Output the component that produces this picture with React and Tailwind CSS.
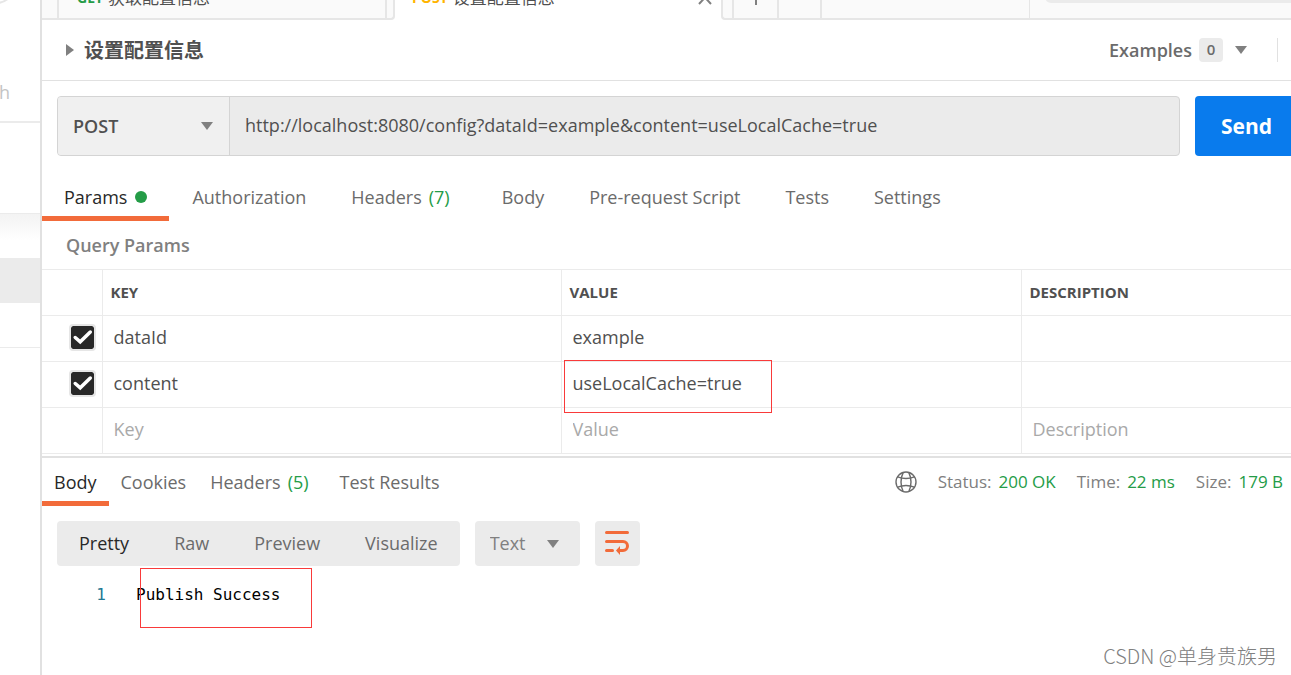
import { useState } from 'react';

const requestTabs = [
  { label: 'Params', dot: true },
  { label: 'Authorization' },
  { label: 'Headers', count: 7 },
  { label: 'Body' },
  { label: 'Pre-request Script' },
  { label: 'Tests' },
  { label: 'Settings' }
];

const responseTabs = [
  { label: 'Body' },
  { label: 'Cookies' },
  { label: 'Headers', count: 5 },
  { label: 'Test Results' }
];

const viewModes = ['Pretty', 'Raw', 'Preview', 'Visualize'];

const responseMeta = [
  { label: 'Status:', value: '200 OK' },
  { label: 'Time:', value: '22 ms' },
  { label: 'Size:', value: '179 B' }
];

const initialParams = [
  { key: 'dataId', value: 'example' },
  { key: 'content', value: 'useLocalCache=true', marked: true }
];

const Caret = ({ className = '' }) => (
  <svg viewBox="0 0 12 8" aria-hidden="true" className={`w-3 h-2 shrink-0 fill-[#808080] ${className}`}>
    <path d="M0 0h12L6 8z" />
  </svg>
);

const GlobeIcon = () => (
  <svg viewBox="0 0 22 22" fill="none" stroke="#6b6b6b" strokeWidth="1.4" className="w-[22px] h-[22px]">
    <circle cx="11" cy="11" r="10" />
    <path d="M8.2 1.4C5.4 7.5 5.4 14.5 8.2 20.6M13.8 1.4c2.8 6.1 2.8 13.1 0 19.2" />
    <path d="M2.6 5.8c5.5 2.2 11.3 2.2 16.8 0M2.6 16.2c5.500-2.200 11.300-2.200 16.800 0" />
  </svg>
);

const WrapIcon = () => (
  <svg viewBox="0 0 24 24" fill="none" stroke="#f26b3a" strokeWidth="3" strokeLinecap="round" className="w-6 h-6">
    <path d="M1.5 1.5h21M1.5 10.5h16.5a4.5 4.5 0 0 1 0 9H15M1.5 19.5h6" />
    <path d="M11 19.500l4-4.500v9z" fill="#f26b3a" stroke="none" />
  </svg>
);

const TabRow = ({ tabs, active, onSelect, className, tabClass, label }) => (
  <div role="tablist" aria-label={label} className={`flex h-full ${className}`}>
    {tabs.map((tab) => {
      const selected = tab.label === active;
      return (
        <button
          key={tab.label}
          role="tab"
          aria-selected={selected}
          onClick={() => onSelect(tab.label)}
          className={`flex items-center border-b-5 whitespace-nowrap ${tabClass} ${
            selected ? 'border-[#f26b3a] text-[#282828]' : 'border-transparent text-[#6b6b6b]'
          }`}
        >
          {tab.label}
          {tab.dot && <span className="ml-2 w-3 h-3 rounded-full bg-[#249c47]" />}
          {tab.count && <span className="mx-[7px] text-[#249c47]">({tab.count})</span>}
        </button>
      );
    })}
  </div>
);

const Sidebar = () => (
  <aside className="w-[42px] shrink-0 overflow-hidden border-r-2 border-[#e1e1e1] text-lg text-[#c4c4c4]">
    <div className="h-[123px] relative border-b-2 border-[#ebebeb] flex flex-col justify-end pb-[15px]">
      <span className="absolute -left-9 -top-9 w-13 h-10 rounded-full border-2 border-[#e6e6e6]" />
      <span className="flex justify-end w-[10px] leading-7">h</span>
    </div>
    <div className="h-[91px] border-b border-[#ebebeb]" />
    <div className="h-11 bg-linear-to-b from-[#f3f3f3] to-white to-60%" />
    <div className="h-[45px] bg-[#ebebeb]" />
    <div className="h-[45px] border-b border-[#ebebeb]" />
  </aside>
);

const TabStrip = () => (
  <nav
    aria-label="Open requests"
    className="flex items-end h-5 overflow-hidden text-[17px] text-[#505050] *:h-10 *:shrink-0 *:border-[#e6e6e6] *:bg-[#fafafa]"
  >
    <span className="w-[15px] border-b-2" />
    <button className="flex items-center gap-[5px] w-[330px] border-x-2 border-b-2 px-[18px] pb-0.5">
      <span className="text-sm font-bold text-[#249c47]">GET</span>
      获取配置信息
    </button>
    <span className="w-2 border-r-2 border-b-2 rounded-br" />
    <div className="flex items-center w-[326px] bg-white! pl-[17px] pr-2 pb-1">
      <button className="flex items-center gap-[5px] flex-1">
        <span className="text-sm font-bold text-[#ffb400]">POST</span>
        设置配置信息
      </button>
      <button aria-label="Close tab">
        <svg viewBox="0 0 16 16" stroke="#808080" strokeWidth="2" className="w-4 h-4">
          <path d="M2 1l12 13M14 1L2 14" />
        </svg>
      </button>
    </div>
    <span className="w-[11px] border-l-2 border-b-2 rounded-bl" />
    <button aria-label="New tab" className="flex items-center justify-center w-[47px] border-x-2 border-b-2">
      <svg viewBox="0 0 16 16" stroke="#808080" strokeWidth="2" className="w-4 h-4">
        <path d="M8 0v14M1 7h14" />
      </svg>
    </button>
    <span className="w-[43px] border-r-2 border-b-2" />
    <span className="flex-1 border-b-2" />
    <div className="w-[262px] border-l border-b-2 pl-[15px]">
      <div className="h-[23px] rounded-bl-md bg-[#ebebeb]" />
    </div>
  </nav>
);

const ParamRow = ({ param }) => (
  <tr className="h-[46px] border-b border-[#ebebeb]">
    <td className="pb-0.5">
      <span className="relative flex justify-end pr-1.5">
        <input
          type="checkbox"
          defaultChecked
          aria-label={`Use ${param.key}`}
          className="peer appearance-none w-[27px] h-[27px] rounded border-2 border-[#e6e6e6] checked:bg-[#282828] bg-clip-padding"
        />
        <svg
          viewBox="0 0 26 26"
          fill="none"
          stroke="#fff"
          strokeWidth="3.4"
          strokeLinecap="round"
          className="absolute top-0 right-1.5 w-[27px] h-[27px] pointer-events-none opacity-0 peer-checked:opacity-100"
        >
          <path d="M6 13l4.800 4.200L20.500 7.800" />
        </svg>
      </span>
    </td>
    <td className="border-l border-[#ebebeb] px-[11px]">
      <input aria-label="Key" defaultValue={param.key} className="w-full pb-1 outline-none" />
    </td>
    <td className="relative border-l border-[#ebebeb] px-[11px]">
      <input aria-label="Value" defaultValue={param.value} className="w-full pb-1 outline-none" />
      {param.marked && (
        <span className="absolute left-0.5 -top-0.5 w-52 h-[53px] border border-[#f93a3a] pointer-events-none" />
      )}
    </td>
    <td className="border-l border-[#ebebeb] px-[11px]">
      <input aria-label="Description" className="w-full pb-1 outline-none" />
    </td>
  </tr>
);

const ParamsTable = () => (
  <table className="w-full table-fixed border-t border-[#ebebeb] text-[#505050]">
    <colgroup>
      <col className="w-[60px]" />
      <col className="w-[459px]" />
      <col className="w-[460px]" />
      <col />
    </colgroup>
    <thead>
      <tr className="h-[46px] border-b border-[#ebebeb] text-left text-[15px] *:font-bold">
        <td />
        <th scope="col" className="border-l border-[#ebebeb] px-2">KEY</th>
        <th scope="col" className="border-l border-[#ebebeb] px-2">VALUE</th>
        <th scope="col" className="border-l border-[#ebebeb] px-2">DESCRIPTION</th>
      </tr>
    </thead>
    <tbody>
      {initialParams.map((param) => (
        <ParamRow key={param.key} param={param} />
      ))}
      <tr className="h-[46px] border-b border-[#ebebeb]">
        <td />
        {['Key', 'Value', 'Description'].map((name) => (
          <td key={name} className="border-l border-[#ebebeb] px-[11px]">
            <input
              aria-label={`New ${name}`}
              placeholder={name}
              className="w-full pb-1 outline-none placeholder:text-[#a9a9a9]"
            />
          </td>
        ))}
      </tr>
    </tbody>
  </table>
);

const App = () => {
  const [requestTab, setRequestTab] = useState('Params');
  const [responseTab, setResponseTab] = useState('Body');
  const [mode, setMode] = useState('Pretty');

  return (
    <div className="relative flex min-h-screen overflow-hidden bg-white font-['Open_Sans','Noto_Sans_CJK_SC',sans-serif] text-lg text-[#505050]">
      <Sidebar />

      <main className="flex-1 min-w-0">
        <TabStrip />

        <header className="flex items-center h-[61px] border-b border-[#e1e1e1] pl-6 pr-[13px]">
          <svg viewBox="0 0 8 12" aria-hidden="true" className="w-2 h-3 fill-[#808080]">
            <path d="M0 0l8 6-8 6z" />
          </svg>
          <h1 className="flex-1 ml-[10px] pt-0.5 text-xl font-bold">设置配置信息</h1>
          <button className="flex items-center font-semibold text-[#6b6b6b]">
            Examples
            <span className="flex items-center justify-center ml-[7px] w-6 h-6 rounded-sm bg-[#ebebeb] text-[15px]">0</span>
            <Caret className="ml-3" />
          </button>
          <span className="ml-[30px] w-px h-6 bg-[#e1e1e1]" />
        </header>

        <form className="flex gap-[15px] pt-[15px] pl-[15px]" onSubmit={(e) => e.preventDefault()}>
          <div className="flex flex-1 h-[60px] rounded border border-[#d4d4d4] bg-[#ebebeb] overflow-hidden">
            <div className="relative flex items-center w-[172px] border-r border-[#d4d4d4] bg-[#f0f0f0]">
              <select aria-label="Method" className="appearance-none w-full h-full pl-[15px] font-semibold outline-none">
                <option>POST</option>
                <option>GET</option>
              </select>
              <Caret className="absolute right-4 pointer-events-none" />
            </div>
            <input
              aria-label="Request URL"
              defaultValue="http://localhost:8080/config?dataId=example&content=useLocalCache=true"
              className="flex-1 pl-[15px] pb-0.5 outline-none"
            />
          </div>
          <button className="w-24 pl-[7px] rounded-l bg-[#097bed] text-[21px] font-bold text-white">Send</button>
        </form>

        <div className="h-[65px] pt-[19px]">
          <TabRow
            label="Request"
            tabs={requestTabs}
            active={requestTab}
            onSelect={setRequestTab}
            className="gap-px"
            tabClass="px-[22px] pt-0.5"
          />
        </div>

        <h2 className="h-12 pl-6 leading-[48px] font-semibold text-[#808080]">Query Params</h2>
        <ParamsTable />

        <section className="mt-0.5 border-t-2 border-[#e1e1e1]">
          <div className="flex justify-between h-12 pr-2">
            <TabRow
              label="Response"
              tabs={responseTabs}
              active={responseTab}
              onSelect={setResponseTab}
              className=""
              tabClass="px-3 pt-1"
            />
            <div className="flex items-center gap-[21px] text-[17px] text-[#808080]">
              <GlobeIcon />
              {responseMeta.map((item) => (
                <span key={item.label} className="whitespace-nowrap">
                  {item.label}
                  <span className="ml-[7px] text-[#249c47]">{item.value}</span>
                </span>
              ))}
            </div>
          </div>

          <div className="flex gap-[15px] pt-[15px] pl-[15px] h-[60px]">
            <div className="flex gap-px rounded bg-[#ebebeb]">
              {viewModes.map((name) => (
                <button
                  key={name}
                  onClick={() => setMode(name)}
                  className={`px-[22px] pb-0.5 ${name === mode ? 'text-[#282828]' : 'text-[#6b6b6b]'}`}
                >
                  {name}
                </button>
              ))}
            </div>
            <div className="relative flex items-center w-[105px] rounded bg-[#ebebeb]">
              <select aria-label="Format" className="appearance-none w-full h-full pl-[15px] pb-0.5 text-[#808080] outline-none">
                <option>Text</option>
                <option>JSON</option>
              </select>
              <Caret className="absolute right-[21px] pointer-events-none" />
            </div>
            <button aria-label="Wrap lines" className="flex items-center justify-center w-[45px] pb-0.5 rounded bg-[#ebebeb]">
              <WrapIcon />
            </button>
          </div>

          <div className="relative flex pt-[17px] font-['DejaVu_Sans_Mono',monospace] text-base text-black">
            <span className="w-16 text-right text-[#237893]">1</span>
            <pre className="ml-[30px] font-[inherit]">Publish Success</pre>
            <span className="absolute left-[98px] top-0.5 w-[172px] h-[60px] border border-[#f93a3a] pointer-events-none" />
          </div>
        </section>
      </main>

      <span className="absolute right-[14px] bottom-[5px] font-['Noto_Sans_CJK_SC',sans-serif] text-xl font-light text-[#808080]">
        CSDN @单身贵族男
      </span>
    </div>
  );
};

export default App;
